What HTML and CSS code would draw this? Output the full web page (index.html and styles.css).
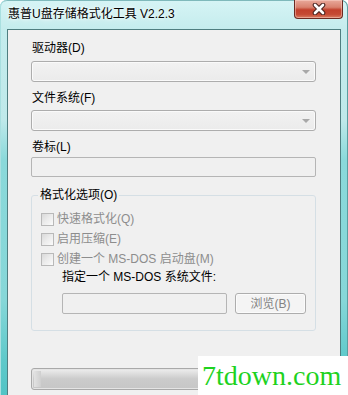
FILE: index.html
```html
<!DOCTYPE html>
<html lang="zh-CN">
<head>
<meta charset="utf-8">
<title>惠普U盘存储格式化工具 V2.2.3</title>
<link rel="stylesheet" href="styles.css">
</head>
<body>
<div class="window">
  <div class="titlebar">
    <span class="title">惠普U盘存储格式化工具 V2.2.3</span>
    <button class="close" aria-label="关闭">
      <svg width="14" height="12" viewBox="0 0 14 12">
        <path d="M3 2 L11 10 M11 2 L3 10" stroke="#4a2420" stroke-width="4.6" stroke-linecap="round" fill="none"/>
        <path d="M3 2 L11 10 M11 2 L3 10" stroke="#ffffff" stroke-width="2.6" stroke-linecap="round" fill="none"/>
      </svg>
    </button>
  </div>
  <div class="client">
    <div class="label first">驱动器(D)</div>
    <div class="combo"><span class="arrow"></span></div>
    <div class="label">文件系统(F)</div>
    <div class="combo c2"><span class="arrow"></span></div>
    <div class="label">卷标(L)</div>
    <div class="textbox"></div>
    <fieldset class="group">
      <legend class="legend">格式化选项(O)</legend>
      <div class="check"><span class="box"></span><span>快速格式化(Q)</span></div>
      <div class="check"><span class="box"></span><span>启用压缩(E)</span></div>
      <div class="check"><span class="box"></span><span>创建一个 MS-DOS 启动盘(M)</span></div>
      <div class="sublabel">指定一个 MS-DOS 系统文件:</div>
      <div class="filerow">
        <div class="filebox"></div>
        <div class="browse">浏览(B)</div>
      </div>
    </fieldset>
    <div class="progress"><span class="glow"></span></div>
  </div>
  <div class="watermark">7tdown.com</div>
</div>
</body>
</html>
```

FILE: styles.css
```css
html, body {
  margin: 0;
  padding: 0;
  background: #ffffff;
}

body {
  font-family: "Liberation Sans", "Noto Sans CJK SC", sans-serif;
  font-size: 12px;
  color: #000;
}

.window {
  position: relative;
  width: 348px;
  height: 395px;
  overflow: hidden;
  display: flex;
  flex-direction: column;
  border-radius: 7px 7px 0 0;
  background: linear-gradient(to bottom,
    #d6f4f5 0px,
    #c4eced 30px,
    #bfe9ea 120px,
    #8ad9da 160px,
    #86d7d8 300px,
    #5ec9ca 360px,
    #52c4c5 395px);
  box-shadow: inset 1px 0 0 #a9dfe0, inset -1px 0 0 #5a9ea0, inset 0 1px 0 #7fb9bb;
}

.titlebar {
  height: 29px;
  flex: none;
  display: flex;
  align-items: flex-start;
  padding-left: 8px;
}

.title {
  padding-top: 6px;
  line-height: 16px;
  font-size: 12px;
  color: #000;
  text-shadow: 0 0 6px #ffffff, 0 0 3px #ffffff;
}

.close {
  margin-left: auto;
  margin-right: 5px;
  width: 49px;
  height: 19px;
  padding: 0;
  border: 1px solid #6b2a22;
  border-top: none;
  border-radius: 0 0 4px 4px;
  background: linear-gradient(to bottom, #e9a99b 0%, #d9826f 40%, #c2402c 55%, #c54a34 80%, #d87d62 100%);
  box-shadow: inset 0 0 0 1px rgba(255, 220, 210, 0.45);
  display: flex;
  align-items: center;
  justify-content: center;
}

.client {
  flex: 1;
  margin: 0 7px;
  border: 1px solid #4f7e80;
  border-bottom: none;
  background: #f0f0f0;
  padding: 0 24px 0 23px;
  display: flex;
  flex-direction: column;
}

.label {
  line-height: 16px;
  margin-top: 8px;
  padding-left: 1px;
}

.label.first {
  margin-top: 10px;
}

.combo {
  position: relative;
  margin-top: 5px;
  height: 21px;
  box-sizing: border-box;
  border: 1px solid #adadad;
  border-radius: 3px;
  background: linear-gradient(to bottom, #f2f2f2, #ebebeb);
  box-shadow: inset 0 0 0 1px #fafafa;
}

.combo.c2 {
  margin-top: 4px;
}

.arrow {
  position: absolute;
  right: 5px;
  top: 8px;
  width: 0;
  height: 0;
  border-left: 4px solid transparent;
  border-right: 4px solid transparent;
  border-top: 4px solid #a8a8a8;
}

.textbox {
  margin-top: 2px;
  height: 20px;
  box-sizing: border-box;
  border: 1px solid #b5b5b5;
  border-radius: 2px;
  background: #f0f0f0;
}

.group {
  margin: 10px 0 0 0;
  padding: 6px 0 16px 0;
  border: 1px solid #d5dfe5;
  border-radius: 3px;
  min-width: 0;
}

.legend {
  margin-left: 6px;
  padding: 0 2px;
  line-height: 16px;
  color: #000;
}

.check {
  height: 20px;
  display: flex;
  align-items: center;
  padding-left: 9px;
  color: #8d8d8d;
  line-height: 16px;
}

.box {
  width: 13px;
  height: 13px;
  box-sizing: border-box;
  border: 1px solid #b9b9b9;
  background: linear-gradient(135deg, #d9d9d9 0%, #ececec 50%, #fbfbfb 100%);
  margin-right: 3px;
  flex: none;
}

.sublabel {
  margin-left: 30px;
  line-height: 16px;
  color: #000;
}

.filerow {
  margin-top: 8px;
  margin-left: 30px;
  display: flex;
  gap: 8px;
}

.filebox {
  width: 165px;
  height: 21px;
  box-sizing: border-box;
  border: 1px solid #b5b5b5;
  border-radius: 2px;
  background: #f0f0f0;
}

.browse {
  width: 71px;
  height: 21px;
  box-sizing: border-box;
  border: 1px solid #adadad;
  border-radius: 3px;
  background: #f4f4f4;
  box-shadow: inset 0 0 0 1px #fbfbfb;
  color: #838383;
  display: flex;
  align-items: center;
  justify-content: center;
  line-height: 16px;
}

.progress {
  position: relative;
  margin-top: 37px;
  height: 22px;
  box-sizing: border-box;
  border: 1px solid #a9a9a9;
  border-radius: 3px;
  background: linear-gradient(to bottom, #eeeeee 0%, #dcdcdc 25%, #cbcbcb 50%, #c6c6c6 100%);
  box-shadow: inset 0 0 0 1px #e4e4e4;
}

.glow {
  position: absolute;
  left: 2px;
  top: 2px;
  width: 7px;
  height: 16px;
  background: linear-gradient(to right, #e2e2e2, #cfcfcf);
}

.watermark {
  position: absolute;
  left: 198px;
  top: 356px;
  width: 150px;
  height: 39px;
  background: #ffffff;
  color: #1ed21e;
  font-family: "Liberation Serif", serif;
  font-size: 28px;
  line-height: 39px;
  padding-left: 4px;
  box-sizing: border-box;
  white-space: nowrap;
}
```
